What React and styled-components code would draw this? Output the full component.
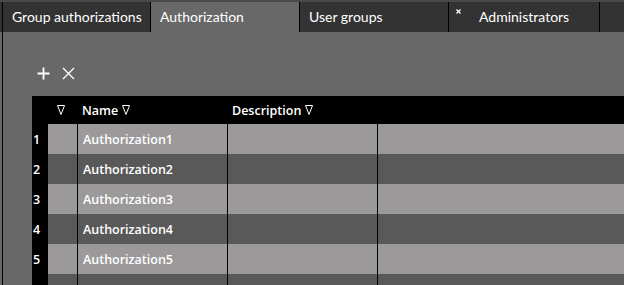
import React from 'react';
import styled, { createGlobalStyle } from 'styled-components';

const GlobalStyle = createGlobalStyle`
  html, body {
    margin: 0;
    padding: 0;
    background: #686868;
    font-family: "Open Sans", "Liberation Sans", sans-serif;
    overflow: hidden;
  }
`;

const tabs = [
  { label: 'Group authorizations', width: 148 },
  { label: 'Authorization', width: 149, active: true },
  { label: 'User groups', width: 149 },
  { label: 'Administrators', width: 151, closable: true },
];

const rows = ['Authorization1', 'Authorization2', 'Authorization3', 'Authorization4', 'Authorization5', ''];

const App = () => {
  return (
    <Page>
      <GlobalStyle />
      <TabBar>
        {tabs.map((t) => (
          <Tab key={t.label} $width={t.width} $active={t.active} $closable={t.closable}>
            {t.closable && (
              <CloseMark width="5" height="5" viewBox="0 0 5 5">
                <path d="M0.5 0.5l4 4M4.5 0.5l-4 4" stroke="#fff" strokeWidth="1.3" />
              </CloseMark>
            )}
            {t.label}
          </Tab>
        ))}
        <TabFiller />
      </TabBar>
      <Content>
        <Toolbar>
          <ToolButton aria-label="add">
            <svg width="13" height="13" viewBox="0 0 13 13">
              <path d="M6.5 0.5v12M0.5 6.5h12" stroke="#fff" strokeWidth="1.8" />
            </svg>
          </ToolButton>
          <ToolButton aria-label="delete">
            <svg width="13" height="13" viewBox="0 0 13 13">
              <path d="M1 1l11 11M12 1L1 12" stroke="#fff" strokeWidth="1.3" />
            </svg>
          </ToolButton>
        </Toolbar>
        <Table>
          <HeaderRow>
            <IndexCell />
            <FilterCell>
              <Funnel />
            </FilterCell>
            <HeadCell>
              Name <Funnel />
            </HeadCell>
            <HeadCell>
              Description <Funnel />
            </HeadCell>
            <Rest />
          </HeaderRow>
          {rows.map((name, i) => (
            <Row key={i} $light={i % 2 === 0}>
              <IndexCell>{i + 1}</IndexCell>
              <FilterCell />
              <Cell>{name}</Cell>
              <Cell />
              <Rest />
            </Row>
          ))}
        </Table>
      </Content>
    </Page>
  );
};

const Funnel = () => (
  <FunnelIcon width="8" height="10" viewBox="0 0 8 10">
    <path d="M0.5 0.5h7L4 9.5z" fill="none" stroke="#fff" strokeWidth="1" strokeLinejoin="round" />
  </FunnelIcon>
);

const Page = styled.div`
  width: 624px;
  height: 285px;
  display: flex;
  flex-direction: column;
  background: #686868;
  border-top: 2px solid #4a4a4a;
  box-sizing: border-box;
  overflow: hidden;
`;

const TabBar = styled.div`
  display: flex;
  height: 30px;
  flex-shrink: 0;
  background: #333333;
  padding-left: 2px;
`;

const Tab = styled.div`
  position: relative;
  flex: 0 0 ${(p) => p.$width}px;
  border-left: 1px solid #000;
  background: ${(p) => (p.$active ? '#686868' : '#333333')};
  color: #fff;
  font-family: Lato, "Open Sans", sans-serif;
  font-size: 14px;
  line-height: 30px;
  padding-left: ${(p) => (p.$closable ? '30px' : '9px')};
  box-sizing: border-box;
  white-space: nowrap;
  overflow: hidden;
`;

const CloseMark = styled.svg`
  position: absolute;
  left: 7px;
  top: 7px;
`;

const TabFiller = styled.div`
  flex: 1;
  border-left: 1px solid #000;
`;

const Content = styled.div`
  flex: 1;
  border-left: 1px solid #000;
  margin-left: 2px;
  display: flex;
  flex-direction: column;
  overflow: hidden;
`;

const Toolbar = styled.div`
  display: flex;
  gap: 12px;
  padding: 35px 0 0 34px;
  height: 29px;
  flex-shrink: 0;
  box-sizing: content-box;
`;

const ToolButton = styled.span`
  display: flex;
  width: 13px;
  height: 13px;
`;

const Table = styled.div`
  margin-left: 29px;
  display: flex;
  flex-direction: column;
  color: #fff;
  font-size: 12.5px;
  font-weight: 600;
`;

const HeaderRow = styled.div`
  display: flex;
  height: 28px;
  flex-shrink: 0;
  background: #000;
  align-items: center;
`;

const Row = styled.div`
  display: flex;
  height: 30px;
  flex-shrink: 0;
  background: ${(p) => (p.$light ? '#9b9999' : '#595959')};
`;

const IndexCell = styled.div`
  flex: 0 0 16px;
  align-self: stretch;
  background: #000;
  display: flex;
  align-items: center;
  padding-left: 1px;
  box-sizing: border-box;
`;

const FilterCell = styled.div`
  flex: 0 0 30px;
  align-self: stretch;
  border-right: 1px solid #000;
  display: flex;
  align-items: center;
  padding-left: 9px;
  box-sizing: border-box;
`;

const Cell = styled.div`
  flex: 0 0 150px;
  border-right: 1px solid #000;
  display: flex;
  align-items: center;
  padding-left: 5px;
  box-sizing: border-box;
`;

const HeadCell = styled.div`
  flex: 0 0 150px;
  display: flex;
  align-items: center;
  gap: 4px;
  padding-left: 4px;
  box-sizing: border-box;
`;

const Rest = styled.div`
  flex: 1;
`;

const FunnelIcon = styled.svg`
  display: block;
`;

export default App;
